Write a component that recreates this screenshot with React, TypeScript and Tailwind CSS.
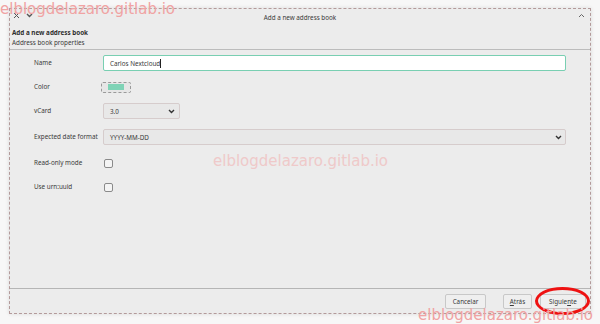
import React from "react";

function Watermark({ className }: { className: string }) {
  return (
    <div
      className={`absolute pointer-events-none whitespace-nowrap font-['DejaVu_Sans',sans-serif] text-[15px] leading-[18px] ${className}`}
    >
      elblogdelazaro.gitlab.io
    </div>
  );
}

function Chevron({ className = "" }: { className?: string }) {
  return (
    <svg width="7" height="5" viewBox="0 0 7 5" className={className}>
      <path d="M1 1 L3.5 3.5 L6 1" fill="none" stroke="#333" strokeWidth="1.4" />
    </svg>
  );
}

function Row({
  label,
  className = "",
  children,
}: {
  label: string;
  className?: string;
  children: React.ReactNode;
}) {
  return (
    <div className={`flex items-center h-[16px] ${className}`}>
      <div className="w-[69px] shrink-0 whitespace-nowrap">{label}</div>
      {children}
    </div>
  );
}

function Checkbox() {
  return <div className="ml-[1px] w-[9px] h-[9px] rounded-[2px] border border-[#8a8a8a] bg-[#f4f4f4]" />;
}

export default function App() {
  return (
    <div className="relative w-[600px] h-[324px] overflow-hidden bg-[#f7f7f7] font-['Noto_Sans',sans-serif] text-[6.3px] text-[#3a3a3a]">
      <div className="ml-[9px] mt-[8px] w-[582px] h-[306px] border border-dashed border-[#b39a9a] bg-[#ececec] flex flex-col shadow-[0_0_4px_rgba(0,0,0,0.12)]">
        {/* title bar */}
        <div className="relative h-[15px] flex items-center justify-center">
          <div className="absolute left-[3px] top-[3px] flex items-center gap-[6px] text-[#555]">
            <svg width="7" height="7" viewBox="0 0 7 7">
              <path d="M1 1 L6 6 M6 1 L1 6" stroke="#555" strokeWidth="1" />
            </svg>
            <Chevron className="opacity-80" />
          </div>
          <span className="leading-[9px] pt-[1px]">Add a new address book</span>
          <svg width="7" height="5" viewBox="0 0 7 5" className="absolute right-[5px] top-[4px]">
            <path d="M1 4 L3.5 1.5 L6 4" fill="none" stroke="#666" strokeWidth="1" />
          </svg>
        </div>

        {/* header */}
        <div className="h-[26px] border-b border-[#bcbcbc] pl-[2px] pt-[4px]">
          <div className="font-bold leading-[9px] text-[#2e2e2e]">Add a new address book</div>
          <div className="leading-[9px] mt-[1px]">Address book properties</div>
        </div>

        {/* form */}
        <div className="flex-1 flex flex-col pl-[24px] pr-[24px] pt-[5px]">
          <Row label="Name">
            <div className="flex-1 h-[16px] rounded-[2px] border border-[#79cfb2] bg-white flex items-center pl-[6px]">
              <span className="leading-[9px]">Carlos Nextcloud</span>
              <span className="w-px h-[9px] bg-[#222]" />
            </div>
          </Row>
          <Row label="Color" className="mt-[8px]">
            <div className="-ml-[2px] w-[30px] h-[11px] rounded-[2px] border border-dashed border-[#9a9a9a] bg-[#e6e6e6] flex items-center justify-center">
              <div className="w-[16px] h-[6px] bg-[#7fd3b6]" />
            </div>
          </Row>
          <Row label="vCard" className="mt-[8px]">
            <div className="w-[77px] h-[16px] rounded-[2px] border border-[#d6cccc] bg-[#e8e8e8] flex items-center justify-between pl-[6px] pr-[4px]">
              <span className="leading-[9px]">3.0</span>
              <Chevron />
            </div>
          </Row>
          <Row label="Expected date format" className="mt-[10px]">
            <div className="flex-1 h-[16px] rounded-[2px] border border-[#d6cccc] bg-[#e8e8e8] flex items-center justify-between pl-[6px] pr-[3px]">
              <span className="leading-[9px]">YYYY-MM-DD</span>
              <Chevron />
            </div>
          </Row>
          <Row label="Read-only mode" className="mt-[10px]">
            <Checkbox />
          </Row>
          <Row label="Use urn:uuid" className="mt-[8px]">
            <Checkbox />
          </Row>
        </div>

        {/* footer */}
        <div className="h-[25px] border-t border-[#b5b5b5] flex items-start justify-end pt-[5px] pr-[4px]">
          <button className="w-[41px] h-[15px] rounded-[2px] border border-[#c8c8c8] bg-[#efefef] leading-[9px]">
            Cancelar
          </button>
          <button className="ml-[17px] w-[29px] h-[15px] rounded-[2px] border border-[#c8c8c8] bg-[#efefef] leading-[9px]">
            <span className="underline">A</span>trás
          </button>
          <button className="relative ml-[8px] w-[46px] h-[15px] rounded-[2px] border border-[#c8c8c8] bg-[#efefef] leading-[9px]">
            Siguie<span className="underline">n</span>te
            <span className="absolute -left-[6px] -top-[8px] w-[55px] h-[28px] rounded-[50%] border-[3px] border-[#ee1111]" />
          </button>
        </div>
      </div>

      <Watermark className="left-[0px] top-[0px] text-[#f0a3a3]" />
      <Watermark className="left-[213px] top-[152px] text-[#efc9c9]" />
      <Watermark className="left-[418px] top-[306px] text-[#f0a3a3]" />
    </div>
  );
}
